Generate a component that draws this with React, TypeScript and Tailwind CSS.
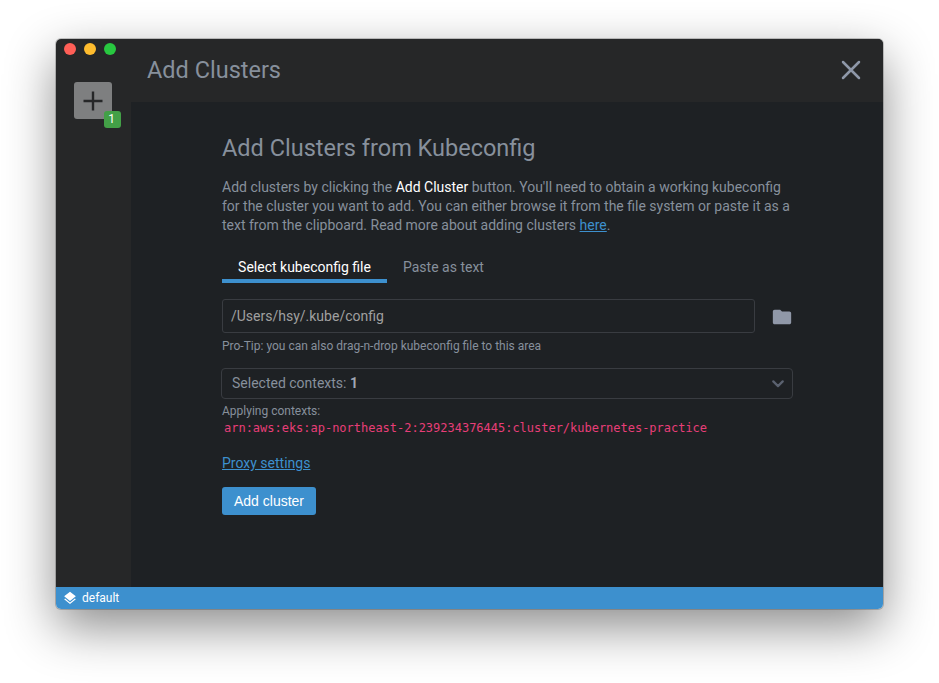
import React from "react";

function TrafficLights() {
  return (
    <div className="flex h-5 items-center gap-2 pl-2">
      <span className="size-3 rounded-full bg-[#ff5f57]" />
      <span className="size-3 rounded-full bg-[#febc2e]" />
      <span className="size-3 rounded-full bg-[#28c840]" />
    </div>
  );
}

function Sidebar() {
  return (
    <aside className="w-[75px] shrink-0 bg-[#262728]">
      <TrafficLights />
      <div className="relative mt-[23px] ml-[18px] flex h-[37px] w-[38px] items-center justify-center rounded-[3px] bg-[#7e7f80]">
        <svg width="20" height="20" viewBox="0 0 20 20" fill="none" stroke="#262728" strokeWidth="2.4">
          <path d="M10 .5v19M.5 10h19" />
        </svg>
        <span className="absolute top-[28.5px] left-[29.5px] flex h-[17px] w-[17px] items-center justify-center rounded-[3px] bg-[#43a047] pr-px text-[12px] leading-none text-white">
          1
        </span>
      </div>
    </aside>
  );
}

function Header() {
  return (
    <header className="flex h-[63px] items-center justify-between bg-[#262728] pr-[22px] pb-0.5 pl-4">
      <h1 className="text-[23.5px] leading-8 text-[#87909c]">Add Clusters</h1>
      <svg width="20" height="20" viewBox="0 0 20 20" fill="none" stroke="#8e97a8" strokeWidth="2.5" strokeLinecap="round">
        <path d="M2 2l16 16M18 2L2 18" />
      </svg>
    </header>
  );
}

function Tabs() {
  return (
    <div className="mt-[17px] flex h-[31px] text-[14px] leading-[31px]">
      <div className="w-[165px] border-b-4 border-[#3d90ce] text-center text-white">Select kubeconfig file</div>
      <div className="px-4 text-[#87909c]">Paste as text</div>
    </div>
  );
}

function ContextForm() {
  return (
    <div>
      <div className="mt-4 flex items-center">
        <div className="flex h-[34px] w-[533px] items-center rounded-[3px] border border-[#393c41] px-2 text-[14px] text-[#a0a0a0]">
          /Users/hsy/.kube/config
        </div>
        <svg className="mt-px ml-[15.5px]" width="22" height="22" viewBox="0 0 24 24" fill="#9098a8">
          <path d="M10 4H4c-1.1 0-2 .9-2 2v12c0 1.1.9 2 2 2h16c1.1 0 2-.9 2-2V8c0-1.1-.9-2-2-2h-8z" />
        </svg>
      </div>
      <p className="mt-[5px] text-[12px] leading-4 text-[#87909c]">
        Pro-Tip: you can also drag-n-drop kubeconfig file to this area
      </p>
      <div className="mt-[14px] -ml-px flex h-[31px] w-[572px] items-center justify-between rounded border border-[#393c41] pr-2 pl-[10px] text-[14px] text-[#87909c]">
        <span>
          Selected contexts: <b className="font-bold text-[#a0a6b4]">1</b>
        </span>
        <svg className="mt-px" width="12" height="8" viewBox="0 0 12 8" fill="none" stroke="#5b6270" strokeWidth="2.2" strokeLinecap="round" strokeLinejoin="round">
          <path d="M1.3 1.4L6 6.1l4.7-4.7" />
        </svg>
      </div>
      <p className="mt-1 text-[12px] leading-4 text-[#87909c]">Applying contexts:</p>
      <code className="ml-[2px] block font-['DejaVu_Sans_Mono',monospace] text-[12px] leading-[18px] tracking-[-0.015px] text-[#e83e78]">
        arn:aws:eks:ap-northeast-2:239234376445:cluster/kubernetes-practice
      </code>
    </div>
  );
}

function StatusBar() {
  return (
    <footer className="flex h-[22px] shrink-0 items-center bg-[#3d90ce] pl-[7px] text-[12px] text-white">
      <svg width="14" height="14" viewBox="0 0 24 24" fill="#fff">
        <path d="M11.99 19.54l-8.37-6.5L2 14.3l10 7.8 10-7.8-1.63-1.26zM12 17l10-7.8L12 1.4 2 9.2z" />
      </svg>
      <span className="ml-[5px]">default</span>
    </footer>
  );
}

export default function App() {
  return (
    <div className="h-[683px] w-[939px] overflow-hidden bg-white pt-[39px] pl-[56px] font-[Roboto,sans-serif]">
      <div className="h-[570px] w-[827px] rounded-[5px] shadow-[0_0_0_1px_rgba(0,0,0,0.2),0_18px_50px_rgba(0,0,0,0.46)]">
        <div className="flex h-full flex-col overflow-hidden rounded-[5px]">
          <div className="flex min-h-0 flex-1">
            <Sidebar />
            <div className="flex flex-1 flex-col bg-[#1e2124]">
              <Header />
              <main className="w-[662px] pt-[30px] pl-[91px]">
                <h2 className="text-[23.5px] leading-8 text-[#87909c]">Add Clusters from Kubeconfig</h2>
                <p className="mt-[14px] text-[14px] leading-[19px] whitespace-nowrap text-[#87909c]">
                  Add clusters by clicking the <span className="text-white">Add Cluster</span> button. You'll need to obtain a working kubeconfig
                  <br />
                  for the cluster you want to add. You can either browse it from the file system or paste it as a
                  <br />
                  text from the clipboard. Read more about adding clusters{" "}
                  <a className="text-[#3d90ce] underline">here</a>.
                </p>
                <Tabs />
                <ContextForm />
                <a className="mt-4 block text-[14px] leading-5 text-[#3d90ce] underline">Proxy settings</a>
                <button className="mt-[14px] block h-[28px] w-[94px] rounded-[3px] bg-[#3d90ce] font-['Liberation_Sans',Arial,sans-serif] text-[14px] text-white">
                  Add cluster
                </button>
              </main>
            </div>
          </div>
          <StatusBar />
        </div>
      </div>
    </div>
  );
}
